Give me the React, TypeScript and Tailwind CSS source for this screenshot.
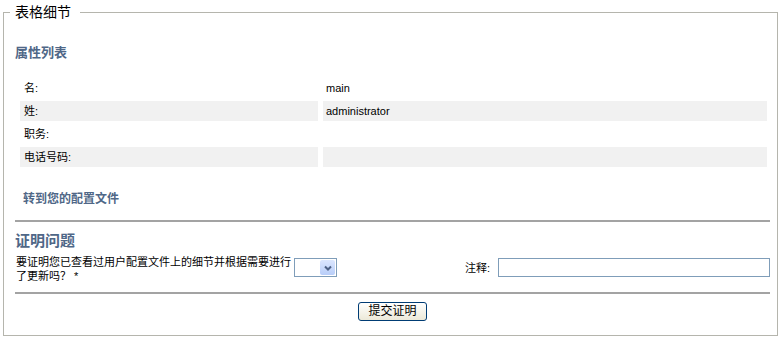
import React from "react";

const rows = [
  { label: "名:", value: "main", shaded: false },
  { label: "姓:", value: "administrator", shaded: true },
  { label: "职务:", value: "", shaded: false },
  { label: "电话号码:", value: "", shaded: true },
];

const font = "font-['Liberation_Sans','Noto_Sans_CJK_SC',sans-serif]";

const App = () => {
  return (
    <div className={`w-[780px] h-[343px] bg-white text-black ${font}`}>
      <fieldset className="ml-[3px] w-[775px] border border-[#b5b5ad] pl-[11px] pr-[7px] pb-[14px]">
        <legend className="ml-[-5px] pl-[5px] pr-[9px] text-[14px] leading-[24px] text-black">
          表格细节
        </legend>

        <h2 className="mt-[19px] h-[20px] text-[13px] font-bold leading-[20px] text-[#4f6787]">
          属性列表
        </h2>

        <div className="mt-[15px] ml-[5px] grid grid-cols-[298px_444px] gap-x-[5px] gap-y-[3px] text-[11px]">
          {rows.map((r) => (
            <React.Fragment key={r.label}>
              <div
                className={`h-[20px] pl-[4px] leading-[20px] ${r.shaded ? "bg-[#f1f1f1]" : ""}`}
              >
                {r.label}
              </div>
              <div
                className={`h-[20px] pl-[3px] leading-[20px] ${r.shaded ? "bg-[#f1f1f1]" : ""}`}
              >
                {r.value}
              </div>
            </React.Fragment>
          ))}
        </div>

        <a className="mt-[24px] ml-[8px] block h-[16px] text-[12px] font-bold leading-[16px] text-[#4f6787]">
          转到您的配置文件
        </a>

        <div className="mt-[13px] border-t-2 border-[#a3a3a3]" />

        <h2 className="mt-[9px] h-[20px] text-[15px] font-bold leading-[20px] text-[#4f6787]">
          证明问题
        </h2>

        <div className="mt-[4px] flex items-start text-[11px]">
          <div className="w-[279px] pl-[1px] leading-[14px]">
            要证明您已查看过用户配置文件上的细节并根据需要进行了更新吗？ *
          </div>
          <div className="mt-[3px] flex h-[19px] w-[43px] justify-end border border-[#7f9db9] bg-white p-[1px]">
            <div className="flex w-[15px] items-center justify-center rounded-[2px] bg-gradient-to-b from-[#dbe6fe] to-[#b8cdf8]">
              <svg width="8" height="6" viewBox="0 0 8 6">
                <path d="M1 1.5 L4 4.5 L7 1.5" stroke="#4d6185" strokeWidth="2" fill="none" />
              </svg>
            </div>
          </div>
          <div className="flex flex-1 items-start justify-end">
            <span className="mt-[6px] mr-[8px] leading-[14px]">注释:</span>
            <input
              type="text"
              className="mt-[3px] h-[19px] w-[272px] border border-[#7f9db9] bg-white outline-none"
            />
          </div>
        </div>

        <div className="mt-[9px] border-t-2 border-[#a3a3a3]" />

        <div className="mt-[8px] flex justify-center">
          <button className="h-[19px] w-[69px] rounded-[3px] border border-[#003c74] bg-gradient-to-b from-white to-[#ece9d8] text-[12px] leading-[17px] text-black">
            提交证明
          </button>
        </div>
      </fieldset>
    </div>
  );
};

export default App;
